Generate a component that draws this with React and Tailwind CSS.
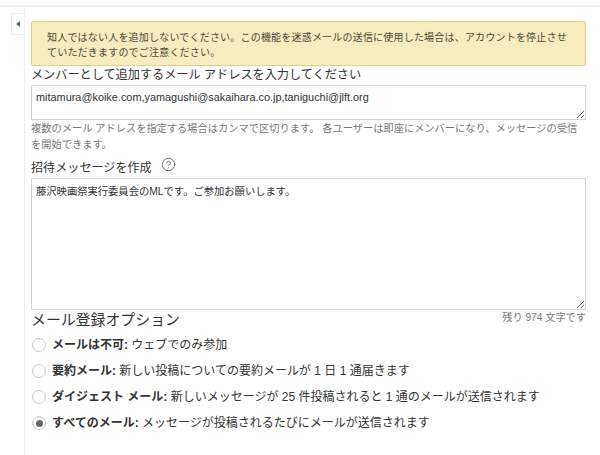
import { CircleHelp } from 'lucide-react';

const FONT = "font-['Liberation_Sans','Noto_Sans_CJK_JP',sans-serif]";

const options = [
  { title: 'メールは不可:', text: ' ウェブでのみ参加' },
  { title: '要約メール:', text: ' 新しい投稿についての要約メールが 1 日 1 通届きます' },
  { title: 'ダイジェスト メール:', text: ' 新しいメッセージが 25 件投稿されると 1 通のメールが送信されます' },
  { title: 'すべてのメール:', text: ' メッセージが投稿されるたびにメールが送信されます', checked: true },
];

const Radio = ({ checked }) => (
  <span className="w-[14px] h-[14px] shrink-0 rounded-full border border-[#c8c8c8] bg-white flex items-center justify-center">
    {checked && <span className="w-[7px] h-[7px] rounded-full bg-[#666]" />}
  </span>
);

const App = () => {
  return (
    <div className={`${FONT} w-[600px] h-[455px] bg-white overflow-hidden flex flex-col text-[#333]`}>
      <div className="h-[2px] mt-[5px] bg-[#f2f2f2] shrink-0" />
      <div className="flex flex-1 min-h-0">
        <div className="w-[25px] shrink-0 border-r border-[#eeeeee] pt-[6px] flex justify-end">
          <button className="w-[13px] h-[22px] bg-white border border-r-0 border-[#eeeeee] flex items-center justify-center">
            <span className="w-0 h-0 border-y-[3px] border-y-transparent border-r-[4px] border-r-[#666]" />
          </button>
        </div>
        <div className="w-[555px] ml-[6px] pt-[14px]">
          <div className="h-[45px] bg-[#f6ecbd] border border-[#e3cf8e] rounded-[2px] pl-[15px] pr-[11px] pt-[8px] text-[10px] tracking-[0.2px] leading-[15px] text-[#4a4a3a]">
            知人ではない人を追加しないでください。この機能を迷惑メールの送信に使用した場合は、アカウントを停止させていただきますのでご注意ください。
          </div>
          <label className="block text-[12.15px] leading-[19px] text-[#333]">
            メンバーとして追加するメール アドレスを入力してください
          </label>
          <textarea
            readOnly
            defaultValue="mitamura@koike.com,yamagushi@sakaihara.co.jp,taniguchi@jlft.org"
            className="block w-full h-[35px] border border-[#d4d4d4] px-1 py-[4px] text-[10.9px] leading-[15px] text-[#333] outline-none"
          />
          <p className="text-[10.24px] leading-[16px] text-[#777] mt-[1px]">
            複数のメール アドレスを指定する場合はカンマで区切ります。 各ユーザーは即座にメンバーになり、メッセージの受信を開始できます。
          </p>
          <div className="flex items-center mt-[3px] h-[20px]">
            <span className="text-[12.1px] leading-[18px] mt-[3px]">招待メッセージを作成</span>
            <CircleHelp className="w-[15px] h-[15px] ml-[9px] -mt-[4px] text-[#666]" strokeWidth={1.5} />
          </div>
          <textarea
            readOnly
            defaultValue="藤沢映画祭実行委員会のMLです。ご参加お願いします。"
            className="block w-full h-[132px] mt-[2px] border border-[#d4d4d4] px-1 py-[5px] text-[10.3px] leading-[15px] text-[#333] outline-none"
          />
          <div className="flex justify-between items-start">
            <h3 className="text-[14.9px] leading-[20px] font-normal">メール登録オプション</h3>
            <span className="text-[10.2px] leading-[14px] text-[#777] mt-[1px]">残り 974 文字です</span>
          </div>
          <div className="mt-[6px] ml-[1px] flex flex-col gap-[8px]">
            {options.map((o) => (
              <div key={o.title} className="flex items-center h-[18px] text-[12px] leading-[18px] gap-[6px]">
                <Radio checked={o.checked} />
                <span>
                  <b className="font-bold">{o.title}</b>
                  {o.text}
                </span>
              </div>
            ))}
          </div>
        </div>
      </div>
    </div>
  );
};

export default App;
